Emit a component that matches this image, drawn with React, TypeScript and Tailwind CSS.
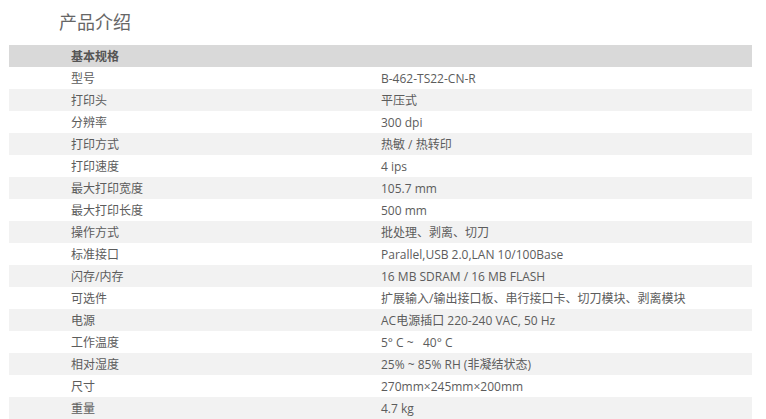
const specs: [string, string][] = [
  ["型号", "B-462-TS22-CN-R"],
  ["打印头", "平压式"],
  ["分辨率", "300 dpi"],
  ["打印方式", "热敏 / 热转印"],
  ["打印速度", "4 ips"],
  ["最大打印宽度", "105.7 mm"],
  ["最大打印长度", "500 mm"],
  ["操作方式", "批处理、剥离、切刀"],
  ["标准接口", "Parallel,USB 2.0,LAN 10/100Base"],
  ["闪存/内存", "16 MB SDRAM / 16 MB FLASH"],
  ["可选件", "扩展输入/输出接口板、串行接口卡、切刀模块、剥离模块"],
  ["电源", "AC电源插口 220-240 VAC, 50 Hz"],
  ["工作温度", "5° C ~   40° C"],
  ["相对湿度", "25% ~ 85% RH (非凝结状态)"],
  ["尺寸", "270mm×245mm×200mm"],
  ["重量", "4.7 kg"],
];

export default function App() {
  return (
    <div
      className="w-[766px] h-[419px] overflow-hidden bg-white text-[#5c5c5c]"
      style={{ fontFamily: '"Open Sans", "Noto Sans CJK SC", sans-serif' }}
    >
      <h2 className="pl-[59px] pt-[10px] h-[45px] text-[18px] leading-[24px] text-[#666] font-normal">
        产品介绍
      </h2>
      <div className="ml-[9px] w-[743px] text-[12px]">
        <div className="grid grid-cols-[372px_1fr] h-[22px] items-center bg-[#d9d9d9] pt-px">
          <div className="pl-[62px] font-bold text-[#555]">基本规格</div>
          <div />
        </div>
        {specs.map(([label, value], i) => (
          <div
            key={label}
            className={
              "grid grid-cols-[372px_1fr] h-[22px] items-center whitespace-pre pt-px " +
              (i % 2 === 1 ? "bg-[#f2f2f2]" : "bg-white")
            }
          >
            <div className="pl-[62px]">{label}</div>
            <div>{value}</div>
          </div>
        ))}
      </div>
    </div>
  );
}
